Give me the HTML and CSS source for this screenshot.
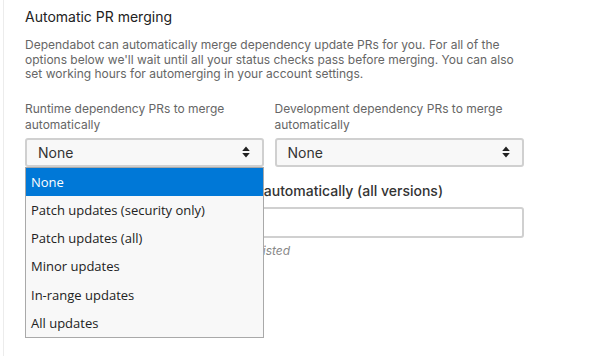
FILE: index.html
```html
<!DOCTYPE html>
<html>
<head>
<meta charset="utf-8">
<link rel="stylesheet" href="styles.css">
</head>
<body>
<div class="page">
  <section class="card">
    <h2 class="title">Automatic PR merging</h2>
    <p class="desc">Dependabot can automatically merge dependency update PRs for you. For all of the options below we'll wait until all your status checks pass before merging. You can also set working hours for automerging in your account settings.</p>
    <div class="row">
      <div class="field f1">
        <label class="lbl">Runtime dependency PRs to merge automatically</label>
        <div class="select-wrap">
          <div class="select">
            <span>None</span>
            <svg class="caret" width="8" height="12" viewBox="0 0 8 12"><path d="M4 0.5L7.8 5H0.2Z M4 11.5L7.8 7H0.2Z" fill="#222"/></svg>
          </div>
          <ul class="menu">
            <li class="opt active">None</li>
            <li class="opt">Patch updates (security only)</li>
            <li class="opt">Patch updates (all)</li>
            <li class="opt">Minor updates</li>
            <li class="opt">In-range updates</li>
            <li class="opt">All updates</li>
          </ul>
        </div>
      </div>
      <div class="field f2">
        <label class="lbl">Development dependency PRs to merge automatically</label>
        <div class="select">
          <span>None</span>
          <svg class="caret" width="8" height="12" viewBox="0 0 8 12"><path d="M4 0.5L7.8 5H0.2Z M4 11.5L7.8 7H0.2Z" fill="#222"/></svg>
        </div>
      </div>
    </div>
    <div class="block">
      <label class="lbl2">Specified dependencies to merge automatically (all versions)</label>
      <div class="input"></div>
      <p class="help">Separate dependencies with commas as listed</p>
    </div>
  </section>
</div>
</body>
</html>
```
FILE: styles.css
```css
html, body {
  margin: 0;
  padding: 0;
  background: #fff;
}
.page {
  border-left: 1px solid #ececec;
  margin-left: 3px;
  min-height: 356px;
  box-sizing: border-box;
  padding: 8px 0 0 21px;
  font-family: Inter, "Liberation Sans", sans-serif;
}
.card {
  width: 499px;
}
.title {
  margin: 0;
  font-size: 14px;
  font-weight: 400;
  color: #222;
  line-height: 18px;
}
.desc {
  margin: 12px 0 0;
  font-size: 12px;
  line-height: 14.5px;
  color: #666;
}
.row {
  display: flex;
  gap: 11px;
  margin-top: 19px;
}
.field.f1 { width: 239px; }
.field.f2 { width: 250px; }
.lbl {
  display: block;
  font-size: 12px;
  line-height: 16px;
  color: #666;
  height: 32px;
  margin-bottom: 5px;
}
.select-wrap {
  position: relative;
}
.select {
  height: 29px;
  box-sizing: border-box;
  border: 2px solid #d0d0d0;
  border-radius: 3px;
  background: #f8f8f8;
  display: flex;
  align-items: center;
  justify-content: space-between;
  padding: 0 12px 0 11px;
  font-size: 14px;
  color: #333;
}
.menu {
  position: absolute;
  left: 0;
  top: 29px;
  width: 239px;
  box-sizing: border-box;
  margin: 0;
  padding: 0;
  list-style: none;
  border: 1px solid #a9a9a9;
  background: #f8f8f8;
  z-index: 5;
  font-family: "Open Sans", "Noto Sans", sans-serif;
  font-size: 13px;
}
.opt {
  height: 28.33px;
  line-height: 28.33px;
  padding-left: 5px;
  color: #222;
}
.opt.active {
  background: #0078d7;
  color: #fff;
}
.block {
  margin-top: 15px;
}
.lbl2 {
  display: block;
  font-size: 14px;
  font-weight: 500;
  color: #333;
  line-height: 18px;
  white-space: nowrap;
  text-indent: 10px;
}
.input {
  margin-top: 7px;
  height: 31px;
  box-sizing: border-box;
  border: 2px solid #d0d0d0;
  border-radius: 3px;
  background: #fff;
}
.help {
  margin: 5px 0 0;
  font-size: 12px;
  font-style: italic;
  color: #888;
}
```
